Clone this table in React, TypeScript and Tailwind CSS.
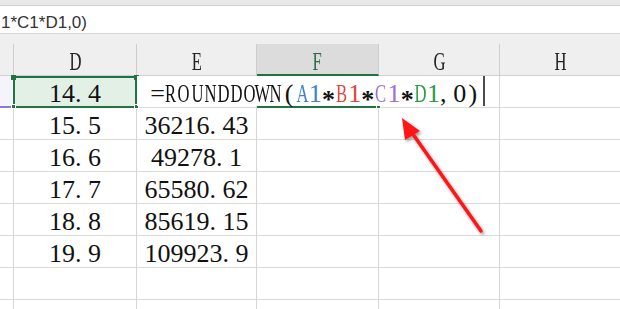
import React from "react";

type Piece = { t: string; c?: string };

function Mono({ pieces, cellClass }: { pieces: Piece[]; cellClass: string }) {
  const chars: { ch: string; c: string }[] = [];
  pieces.forEach((p) => p.t.split("").forEach((ch) => chars.push({ ch, c: p.c || "" })));
  return (
    <span className="inline-flex shrink-0">
      {chars.map(({ ch, c }, i) => {
        const upper = /[A-Z]/.test(ch);
        const left = ch === "." || ch === ",";
        const star = ch === "*";
        return (
          <span
            key={i}
            className={`inline-flex shrink-0 ${cellClass} ${left ? "justify-start" : "justify-center"} ${c}`}
          >
            <span
              className={
                upper
                  ? "inline-block scale-x-[0.64]"
                  : star
                  ? "inline-block translate-y-[6px] font-bold"
                  : "inline-block"
              }
            >
              {ch}
            </span>
          </span>
        );
      })}
    </span>
  );
}

const W = ["w-[14px]", "w-[123px]", "w-[120px]", "w-[122px]", "w-[121px]", "w-[120px]"];

function HeaderRow() {
  const letters = ["", "D", "E", "F", "G", "H"];
  return (
    <div className="flex h-[32px] bg-[#efefef]">
      {letters.map((l, i) => {
        const active = l === "F";
        return (
          <div
            key={i}
            className={`${W[i]} h-full shrink-0 flex items-center justify-center pt-[5px] ${
              i < 5 ? "border-r border-r-[#cdcdcd]" : ""
            } ${
              active
                ? "bg-[#dcdcdc] border-b-2 border-b-[#217346] text-[#2c6b45]"
                : "border-b border-b-[#d0d0d0] text-[#222]"
            }`}
          >
            {l && <Mono pieces={[{ t: l }]} cellClass="w-[13px]" />}
          </div>
        );
      })}
    </div>
  );
}

function DataRow({ d, e }: { d: string; e: string }) {
  const vals = ["", d, e, "", "", ""];
  return (
    <div className="flex h-[32px]">
      {vals.map((v, i) => (
        <div
          key={i}
          className={`${W[i]} h-full shrink-0 flex items-center justify-center pt-[4px] border-b border-b-[#dadada] ${
            i < 5 ? "border-r border-r-[#d6d6d6]" : ""
          } text-[#111]`}
        >
          {v && <Mono pieces={[{ t: v }]} cellClass="w-[13px]" />}
        </div>
      ))}
    </div>
  );
}

function FirstRow() {
  const formula: Piece[] = [
    { t: "=ROUNDDOWN(" },
    { t: "A1", c: "text-[#3f7fd9]" },
    { t: "*" },
    { t: "B1", c: "text-[#e0443e]" },
    { t: "*" },
    { t: "C1", c: "text-[#9b72d9]" },
    { t: "*" },
    { t: "D1", c: "text-[#2c9a44]" },
    { t: ",0)" },
  ];
  return (
    <div className="relative flex h-[32px]">
      <div className="w-[14px] h-full shrink-0 bg-[#f6f4fb] border-b-2 border-b-[#8f78dc] border-r border-r-[#d6d6d6]" />
      <div className="relative w-[123px] h-full shrink-0 flex items-center justify-center pt-[4px] bg-[#e3f0e6] text-[#111] border-r border-r-[#d6d6d6]">
        <Mono pieces={[{ t: "14.4" }]} cellClass="w-[13px]" />
        <div className="absolute -left-px top-0 w-[124px] h-[32px] border-2 border-[#217346]" />
        <div className="absolute -left-[3px] -top-[1px] w-[5px] h-[5px] bg-[#217346]" />
        <div className="absolute -left-[3px] top-[28px] w-[5px] h-[5px] bg-[#217346] border border-white" />
        <div className="absolute -right-[3px] -top-[1px] w-[5px] h-[5px] bg-[#217346]" />
        <div className="absolute -right-[3px] top-[28px] w-[5px] h-[5px] bg-[#217346] border border-white" />
      </div>
      <div className="w-[120px] h-full shrink-0 border-b border-b-[#dadada] border-r border-r-[#d6d6d6]" />
      <div className="relative w-[122px] h-full shrink-0 border-b-2 border-b-[#217346] border-r border-r-[#d6d6d6]">
        <div className="absolute -right-[3px] top-[28px] w-[5px] h-[5px] bg-[#217346] border border-white" />
      </div>
      <div className="w-[121px] h-full shrink-0 border-b border-b-[#dadada] border-r border-r-[#d6d6d6]" />
      <div className="w-[120px] h-full shrink-0 border-b border-b-[#dadada]" />
      {/* in-cell editor */}
      <div className="absolute left-[137px] top-0 w-[348px] h-[30px] bg-white border-r-2 border-r-[#4d4d4d] flex items-center pl-[14px] pt-[6px] text-[#111]">
        <Mono pieces={formula} cellClass="w-[13.15px]" />
      </div>
    </div>
  );
}

export default function App() {
  const rows: [string, string][] = [
    ["15.5", "36216.43"],
    ["16.6", "49278.1"],
    ["17.7", "65580.62"],
    ["18.8", "85619.15"],
    ["19.9", "109923.9"],
    ["", ""],
    ["", ""],
  ];
  return (
    <div className="relative w-[620px] h-[309px] overflow-hidden bg-white font-[family-name:'Liberation_Serif','Times_New_Roman',serif] text-[26px] leading-[32px]">
      <div className="h-[6px] bg-[#e9e9e9] border-b border-b-[#d3d3d3]" />
      <div className="h-[28px] bg-white border-b border-b-[#d6d6d6] flex items-center pt-[6px] pl-[1px] font-[family-name:'Liberation_Sans',Arial,sans-serif] text-[17px] leading-[20px] text-[#333]">
        1*C1*D1,0)
      </div>
      <div className="h-[10px] bg-[#efefef]" />
      <HeaderRow />
      <FirstRow />
      {rows.map((r, i) => (
        <DataRow key={i} d={r[0]} e={r[1]} />
      ))}
      <svg width="620" height="309" className="absolute left-0 top-0 pointer-events-none">
        <defs>
          <filter id="sh" x="-30%" y="-30%" width="160%" height="160%">
            <feDropShadow dx="1.5" dy="2" stdDeviation="1.6" floodColor="#000" floodOpacity="0.4" />
          </filter>
        </defs>
        <g filter="url(#sh)">
          <line x1="481" y1="231" x2="410" y2="130" stroke="#ff1414" strokeWidth="3.5" strokeLinecap="round" />
          <polygon points="402,118 405,140 420,131" fill="#ff1414" />
        </g>
      </svg>
    </div>
  );
}
